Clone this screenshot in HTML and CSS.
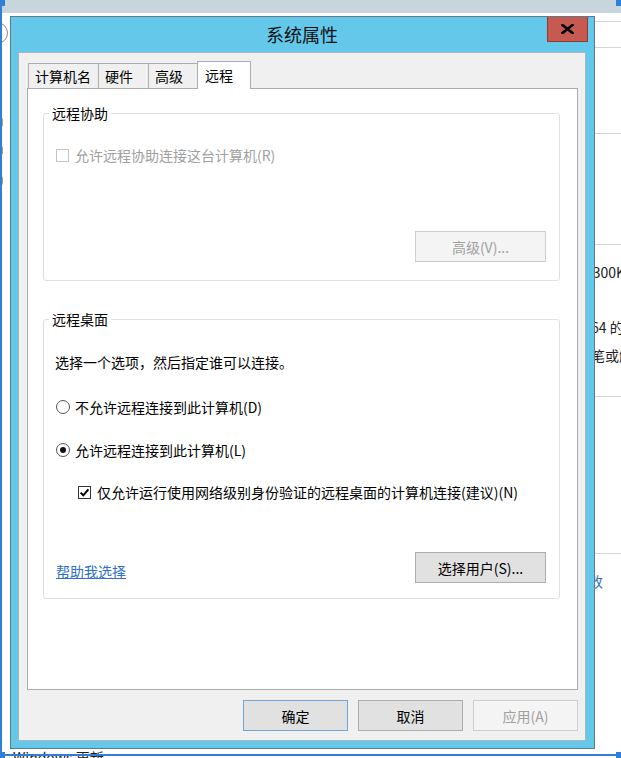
FILE: index.html
```html
<!DOCTYPE html>
<html lang="zh-CN">
  <head>
    <meta charset="UTF-8" />
    <meta name="viewport" content="width=device-width, initial-scale=1.0" />
    <title>系统属性</title>
    <link rel="stylesheet" href="styles.css">
  </head>
  <body>
    <div class="desktop">
      <!-- 后面的系统窗口 -->
      <div class="backwin">
        <div class="strip"></div>
        <i class="rule" style="top: 21px"></i>
        <i class="rule" style="top: 47px"></i>
        <i class="rule" style="top: 133px"></i>
        <i class="rule" style="top: 244px"></i>
        <i class="rule" style="top: 396px"></i>
        <i class="rule" style="top: 553px"></i>
        <span class="bg-text t1">8300K</span>
        <span class="bg-text t2">x64 的</span>
        <span class="bg-text t3">的笔或触</span>
        <span class="bg-text bg-link t4">更改</span>
        <span class="bg-text t5">Windows 更新</span>
        <span class="nav-circle"></span>
        <span class="shield s1"></span>
        <span class="shield s2"></span>
        <span class="shield s3"></span>
      </div>
      <div class="sel-left"></div>
      <div class="sel-bottom"></div>
      <span class="handle h-tl"></span>
      <span class="handle h-tr"></span>
      <span class="handle h-bl"></span>
      <span class="handle h-br"></span>

      <div class="dialog">
        <div class="titlebar">
          <span class="title">系统属性</span>
          <button class="close">
            <svg width="13" height="10" viewBox="0 0 13 10">
              <path d="M1.5 1 L11.5 9 M11.5 1 L1.5 9" stroke="#000" stroke-width="2.6" stroke-linecap="square" />
            </svg>
          </button>
        </div>
        <div class="client">
          <div class="tabs">
            <span class="tab">计算机名</span>
            <span class="tab">硬件</span>
            <span class="tab">高级</span>
            <span class="tab active">远程</span>
          </div>
          <div class="panel">
            <fieldset class="group assist">
              <legend>远程协助</legend>
              <div class="row first disabled">
                <span class="check"></span>
                允许远程协助连接这台计算机(R)
              </div>
              <div class="btn-line">
                <button class="btn wide" disabled>高级(V)...</button>
              </div>
            </fieldset>
            <fieldset class="group desk">
              <legend>远程桌面</legend>
              <div class="row hint">选择一个选项，然后指定谁可以连接。</div>
              <div class="row r1">
                <span class="radio"></span>
                不允许远程连接到此计算机(D)
              </div>
              <div class="row r2">
                <span class="radio on"></span>
                允许远程连接到此计算机(L)
              </div>
              <div class="row r3 sub">
                <span class="check on">
                  <svg width="11" height="11" viewBox="0 0 11 11">
                    <path d="M1.6 5.6 L4.3 8.3 L9.4 2.4" fill="none" stroke="#000" stroke-width="2" />
                  </svg>
                </span>
                仅允许运行使用网络级别身份验证的远程桌面的计算机连接(建议)(N)
              </div>
              <div class="foot">
                <a href="javascript:" class="help">帮助我选择</a>
                <button class="btn wide">选择用户(S)...</button>
              </div>
            </fieldset>
          </div>
          <div class="actions">
            <button class="btn default">确定</button>
            <button class="btn">取消</button>
            <button class="btn" disabled>应用(A)</button>
          </div>
        </div>
      </div>
    </div>
  </body>
</html>
```

FILE: styles.css
```css
* {
  margin: 0;
  padding: 0;
  box-sizing: border-box;
}
body {
  width: 621px;
  height: 758px;
  overflow: hidden;
  background: #fff;
  font-family: "Noto Sans CJK SC", "Noto Sans", sans-serif;
  font-size: 14px;
  color: #000;
}
.desktop {
  position: relative;
  width: 621px;
  height: 758px;
  overflow: hidden;
}

/* 背景窗口 */
.backwin {
  position: absolute;
  inset: 0;
}
.strip {
  height: 13px;
  background: #c7d6dc;
}
.rule {
  position: absolute;
  left: 595px;
  right: 0;
  height: 1px;
  background: #d6d6d6;
}
.bg-text {
  position: absolute;
  line-height: 20px;
  white-space: nowrap;
  color: #222;
}
.t1 { left: 585px; top: 262px; }
.t2 { left: 584px; top: 317px; }
.t3 { left: 577px; top: 345px; }
.t4 { left: 575px; top: 571px; }
.t5 { left: 13px; top: 747px; }
.bg-link {
  color: #3a72c6;
}
.nav-circle {
  position: absolute;
  left: -14px;
  top: 22px;
  width: 22px;
  height: 22px;
  border: 1.5px solid #8a8a8a;
  border-radius: 50%;
}
.shield {
  position: absolute;
  left: 0;
  width: 3px;
  height: 9px;
  background: #b9a25a;
  border-radius: 0 2px 2px 0;
}
.s1 { top: 118px; }
.s2 { top: 146px; }
.s3 { top: 176px; }
.sel-left {
  position: absolute;
  left: 0;
  top: 0;
  width: 2px;
  height: 756px;
  background: #2f7fd8;
}
.sel-bottom {
  position: absolute;
  left: 0;
  right: 3px;
  top: 754px;
  height: 2px;
  background: #2f7fd8;
}
.handle {
  position: absolute;
  width: 5px;
  height: 6px;
  background: #2f7fd8;
}
.h-tl { left: 0; top: 0; }
.h-tr { right: 0; top: 0; }
.h-bl { left: 0; top: 752px; }
.h-br { right: 0; top: 752px; }

/* 对话框 */
.dialog {
  position: absolute;
  left: 10px;
  top: 16px;
  width: 585px;
  height: 733px;
  border: 1px solid #5f7a86;
  background: #63c8ea;
  padding: 0 8px 7px 7px;
}
.titlebar {
  position: relative;
  height: 35px;
  line-height: 35px;
  text-align: center;
  font-size: 18px;
  color: #111;
}
.close {
  position: absolute;
  right: -2px;
  top: 0;
  width: 41px;
  height: 25px;
  border: 1px solid #8c3b35;
  border-top: 0;
  background: #c75a50;
  display: flex;
  align-items: center;
  justify-content: center;
}
.client {
  height: 689px;
  background: #f0f0f0;
  border: 1px solid #aab6bc;
}
.tabs {
  display: flex;
  align-items: flex-end;
  height: 35px;
  padding: 8px 0 0 9px;
}
.tab {
  height: 25px;
  line-height: 24px;
  min-width: 51px;
  padding: 0 7px 0 6px;
  border: 1px solid #acacac;
  border-bottom: 0;
  margin-right: -1px;
  background: #f0f0f0;
}
.tab.active {
  position: relative;
  height: 28px;
  line-height: 26px;
  min-width: 54px;
  margin: 0 0 -1px -1px;
  padding-left: 7px;
  background: #fff;
}
.panel {
  height: 602px;
  margin: 0 7px 0 8px;
  border: 1px solid #acacac;
  background: #fff;
}
.group {
  margin: 14px 17px 0 15px;
  border: 1px solid #dbe0e4;
  border-radius: 3px;
  padding: 0 0 0 12px;
}
.group legend {
  margin-left: -7px;
  padding: 0 3px;
  line-height: 20px;
}
.assist {
  padding-bottom: 18px;
}
.desk {
  margin-top: 28px;
  padding-bottom: 15px;
}
.row {
  display: flex;
  align-items: center;
  height: 20px;
  white-space: nowrap;
}
.row.first { margin-top: 22px; }
.hint { margin-top: 23px; margin-left: -1px; }
.r1 { margin-top: 25px; }
.r2 { margin-top: 23px; }
.r3 { margin-top: 22px; }
.sub { padding-left: 22px; }
.disabled {
  color: #a0a0a0;
}
.check {
  width: 13px;
  height: 13px;
  margin-right: 6px;
  border: 1px solid #333;
  background: #fff;
  display: flex;
  align-items: center;
  justify-content: center;
}
.disabled .check {
  border-color: #c4c4c4;
}
.radio {
  width: 14px;
  height: 14px;
  margin-right: 5px;
  border: 1px solid #555;
  border-radius: 50%;
  background: #fff;
  display: flex;
  align-items: center;
  justify-content: center;
}
.radio.on::after {
  content: "";
  width: 6px;
  height: 6px;
  border-radius: 50%;
  background: #111;
}
.btn-line {
  display: flex;
  justify-content: flex-end;
  margin: 66px 13px 0 0;
}
.foot {
  display: flex;
  justify-content: space-between;
  align-items: flex-end;
  margin: 50px 13px 0 0;
}
.help {
  line-height: 20px;
  margin-bottom: 2px;
  color: #2f6fcb;
}
.btn {
  width: 105px;
  height: 31px;
  border: 1px solid #adadad;
  background: #e1e1e1;
  font-family: inherit;
  font-size: 14px;
  color: #000;
}
.btn.wide {
  width: 131px;
}
.btn:disabled {
  background: #f4f4f4;
  border-color: #cdcdcd;
  color: #a0a0a0;
}
.btn.default {
  border-color: #6fa6d8;
}
.actions {
  display: flex;
  justify-content: flex-end;
  gap: 10px;
  margin: 10px 7px 0 0;
}
```
